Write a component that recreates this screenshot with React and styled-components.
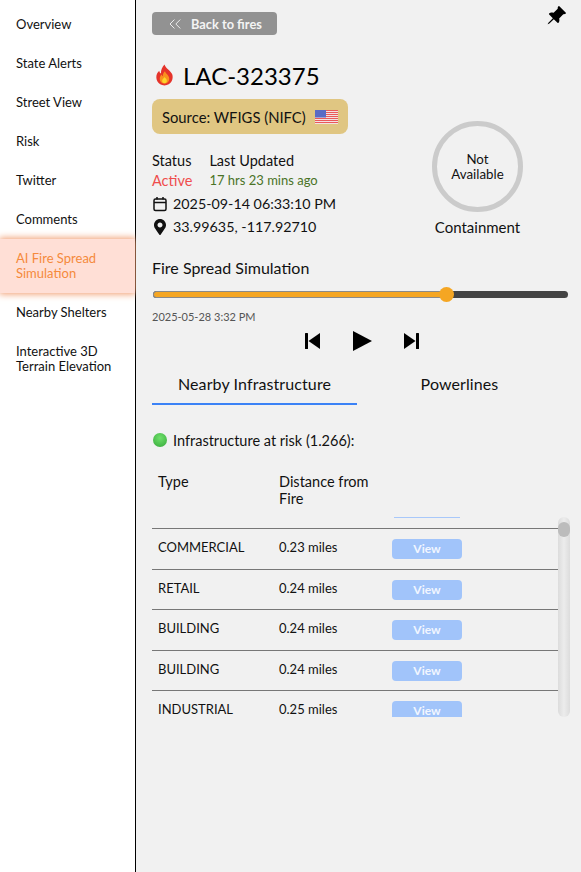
import React from "react";
import styled, { createGlobalStyle } from "styled-components";
import { BsPinAngleFill } from "react-icons/bs";
import { FaMapMarkerAlt } from "react-icons/fa";
import { FiChevronsLeft } from "react-icons/fi";

const navItems = [
  "Overview",
  "State Alerts",
  "Street View",
  "Risk",
  "Twitter",
  "Comments",
  "AI Fire Spread Simulation",
  "Nearby Shelters",
  "Interactive 3D Terrain Elevation",
];

const rows = [
  ["COMMERCIAL", "0.23 miles"],
  ["RETAIL", "0.24 miles"],
  ["BUILDING", "0.24 miles"],
  ["BUILDING", "0.24 miles"],
  ["INDUSTRIAL", "0.25 miles"],
];

function App() {
  return (
    <>
      <GlobalStyle />
      <Page>
        <Sidebar>
          {navItems.map((item) => (
            <NavItem key={item} $active={item.startsWith("AI")}>
              {item}
            </NavItem>
          ))}
        </Sidebar>
        <Main>
          <TopBar>
            <BackButton>
              <FiChevronsLeft size={20} strokeWidth={1.1} />
              Back to fires
            </BackButton>
            <PinIcon size={21} />
          </TopBar>

          <Title>
            <Flame />
            LAC-323375
          </Title>

          <Summary>
            <div>
              <Source>
                Source: WFIGS (NIFC)
                <Flag />
              </Source>
              <StatusRow>
                <StatusCol>
                  <Label>Status</Label>
                  <Active>Active</Active>
                </StatusCol>
                <StatusCol>
                  <Label>Last Updated</Label>
                  <Ago>17 hrs 23 mins ago</Ago>
                </StatusCol>
              </StatusRow>
              <InfoLine>
                <Calendar />
                2025-09-14 06:33:10 PM
              </InfoLine>
              <InfoLine>
                <MarkerIcon size={16} />
                33.99635, -117.92710
              </InfoLine>
            </div>
            <Containment>
              <Ring>
                Not
                <br />
                Available
              </Ring>
              <RingLabel>Containment</RingLabel>
            </Containment>
          </Summary>

          <SectionTitle>Fire Spread Simulation</SectionTitle>
          <Track>
            <TrackFill $percent={70.7} />
            <Thumb $percent={70.7} />
          </Track>
          <SliderDate>2025-05-28 3:32 PM</SliderDate>
          <Controls>
            <SkipBack />
            <Play />
            <SkipNext />
          </Controls>

          <Tabs>
            <Tab $active>Nearby Infrastructure</Tab>
            <Tab>Powerlines</Tab>
          </Tabs>

          <RiskLine>
            <GreenDot />
            Infrastructure at risk (1.266):
          </RiskLine>

          <TableHead>
            <span>Type</span>
            <span>
              Distance from
              <br />
              Fire
            </span>
          </TableHead>
          <Scroller>
            <PartialButton />
            {rows.map(([type, distance], i) => (
              <Row key={i}>
                <span>{type}</span>
                <span>{distance}</span>
                <ViewButton>View</ViewButton>
              </Row>
            ))}
            <ScrollTrack>
              <ScrollThumb />
            </ScrollTrack>
          </Scroller>
        </Main>
      </Page>
    </>
  );
}

function Flame() {
  return (
    <FlameSvg viewBox="0 0 20 22">
      <path
        d="M10 0c1 4 6 6 8 10 2 5-1 12-8 12S0 15 2 10c.7-1.600 1.500-2.600 2.500-3.500C4.700 8 5.300 9 6.300 9.400 6 6 7.500 2.500 10 0z"
        fill="#e5332a"
      />
      <path
        d="M10.500 7c.5 2.500 4.500 4 4.500 8 0 3-2.200 5-5 5s-5-2-5-5c0-2 1-3.500 2-4.500.2 1 .6 1.600 1.200 1.900C8.200 10 9 8.300 10.500 7z"
        fill="#f9901e"
      />
      <path
        d="M10 13c.6 1.200 2.500 2 2.500 4 0 1.500-1.100 2.600-2.500 2.600S7.500 18.500 7.500 17c0-1.800 1.800-2.500 2.500-4z"
        fill="#fbd52c"
      />
    </FlameSvg>
  );
}

function Flag() {
  const stripes = [0, 2, 4, 6, 8, 10, 12];
  return (
    <FlagSvg viewBox="0 0 23 14">
      <rect width="23" height="14" fill="#f4f1f1" />
      {stripes.map((y) => (
        <rect key={y} y={y} width="23" height="1.100" fill="#ea5a5a" />
      ))}
      <rect width="11" height="7.500" fill="#5a6bc4" />
    </FlagSvg>
  );
}

function Calendar() {
  return (
    <IconSvg viewBox="0 0 16 16" fill="none" stroke="#111" strokeWidth="1.500">
      <rect x="2" y="3" width="12" height="11.500" rx="1.500" />
      <path d="M2 6.500h12M5 1v2.500M11 1v2.500" />
    </IconSvg>
  );
}

function SkipBack() {
  return (
    <ControlSvg $w={15} $h={16} viewBox="0 0 15 16">
      <rect x="0" y="0" width="3" height="16" rx="0.500" />
      <path d="M15 0v16L3.500 8z" />
    </ControlSvg>
  );
}

function Play() {
  return (
    <ControlSvg $w={20} $h={20} viewBox="0 0 20 20">
      <path d="M1 0v20l19-10z" />
    </ControlSvg>
  );
}

function SkipNext() {
  return (
    <ControlSvg $w={15} $h={16} viewBox="0 0 15 16">
      <rect x="12" y="0" width="3" height="16" rx="0.500" />
      <path d="M0 0v16L11.500 8z" />
    </ControlSvg>
  );
}

const GlobalStyle = createGlobalStyle`
  html, body {
    margin: 0;
    padding: 0;
    background: #fff;
  }
  * {
    box-sizing: border-box;
  }
  body {
    font-family: "Lato", "Liberation Sans", sans-serif;
    color: #111;
  }
`;

const Page = styled.div`
  display: flex;
  width: 581px;
  height: 872px;
  overflow: hidden;
`;

const Sidebar = styled.nav`
  flex: 0 0 136px;
  padding-top: 5px;
  background: #fff;
  border-right: 1px solid #000;
`;

const NavItem = styled.div`
  padding: 12px 16px;
  font-size: 13px;
  line-height: 15px;
  color: ${(p) => (p.$active ? "#f58a3c" : "#111")};
  background: ${(p) => (p.$active ? "#ffdfd6" : "transparent")};
  box-shadow: ${(p) => (p.$active ? "0 0 7px 1px #f09a6c" : "none")};
`;

const Main = styled.main`
  flex: 1;
  min-width: 0;
  padding: 12px 12px 0 16px;
  background: #f1f1f1;
`;

const TopBar = styled.div`
  display: flex;
  justify-content: space-between;
  align-items: flex-start;
  padding-right: 2px;
`;

const BackButton = styled.div`
  display: flex;
  align-items: center;
  gap: 6px;
  width: 125px;
  height: 23px;
  padding-left: 13px;
  border-radius: 4px;
  background: #929292;
  color: #f4f4f4;
  font-size: 12.800px;
  font-weight: 700;
`;

const PinIcon = styled(BsPinAngleFill)`
  margin-top: -7px;
  color: #000;
`;

const Title = styled.h1`
  display: flex;
  align-items: center;
  gap: 9px;
  margin: 26px 0 0 3px;
  font-size: 24px;
  line-height: 30px;
  font-weight: 400;
  color: #000;
`;

const FlameSvg = styled.svg`
  width: 19px;
  height: 22px;
  margin-top: -3px;
`;

const Summary = styled.section`
  display: flex;
  align-items: flex-start;
  margin-top: 8px;
`;

const Source = styled.div`
  display: inline-flex;
  align-items: center;
  gap: 9px;
  width: 196px;
  height: 35px;
  padding-left: 10px;
  border-radius: 8px;
  background: #e0c682;
  font-size: 14.800px;
`;

const FlagSvg = styled.svg`
  width: 23px;
  height: 14px;
  flex: none;
`;

const StatusRow = styled.div`
  display: flex;
  gap: 17px;
  margin: 17px 0 2px;
`;

const StatusCol = styled.div`
  display: flex;
  flex-direction: column;
`;

const Label = styled.span`
  font-size: 14.500px;
  line-height: 19px;
`;

const Active = styled.span`
  margin-top: 1px;
  font-size: 14.500px;
  line-height: 19px;
  color: #ef4d4d;
`;

const Ago = styled.span`
  margin-top: 1px;
  font-size: 13px;
  line-height: 19px;
  color: #4a7326;
`;

const InfoLine = styled.div`
  display: flex;
  align-items: center;
  gap: 5px;
  height: 23px;
  font-size: 14.300px;
`;

const IconSvg = styled.svg`
  width: 16px;
  height: 16px;
`;

const MarkerIcon = styled(FaMapMarkerAlt)`
  color: #111;
`;

const Containment = styled.div`
  display: flex;
  flex-direction: column;
  align-items: center;
  width: 91px;
  margin: 22px 0 0 84px;
`;

const Ring = styled.div`
  display: flex;
  align-items: center;
  justify-content: center;
  width: 91px;
  height: 91px;
  border: 5px solid #cbcbcb;
  border-radius: 50%;
  font-size: 13.300px;
  line-height: 15px;
  text-align: center;
`;

const RingLabel = styled.div`
  margin-top: 6px;
  font-size: 15px;
  line-height: 18px;
  white-space: nowrap;
`;

const SectionTitle = styled.h2`
  margin: 20px 0 0;
  font-size: 16px;
  line-height: 20px;
  font-weight: 400;
`;

const Track = styled.div`
  position: relative;
  height: 7px;
  margin: 13px 1px 0 1px;
  border-radius: 4px;
  background: #444;
`;

const TrackFill = styled.div`
  width: ${(p) => p.$percent}%;
  height: 100%;
  border: 1px solid #8a8a8a;
  border-right: 0;
  border-radius: 4px 0 0 4px;
  background: #f5a623;
`;

const Thumb = styled.div`
  position: absolute;
  top: -4px;
  left: ${(p) => p.$percent}%;
  width: 15px;
  height: 15px;
  margin-left: -7px;
  border-radius: 50%;
  background: #f5a623;
`;

const SliderDate = styled.div`
  margin-top: 12px;
  font-size: 11px;
  line-height: 14px;
  color: #555;
`;

const Controls = styled.div`
  display: flex;
  align-items: center;
  justify-content: center;
  gap: 32px;
  margin-top: 7px;
  padding-left: 2px;
  height: 20px;
`;

const ControlSvg = styled.svg`
  width: ${(p) => p.$w}px;
  height: ${(p) => p.$h}px;
  fill: #000;
`;

const Tabs = styled.div`
  display: flex;
  margin-top: 19px;
`;

const Tab = styled.div`
  width: 205px;
  height: 35px;
  padding-top: 4px;
  font-size: 16px;
  line-height: 20px;
  letter-spacing: 0.1px;
  text-align: center;
  border-bottom: 2px solid ${(p) => (p.$active ? "#3b82f6" : "transparent")};
`;

const RiskLine = styled.div`
  display: flex;
  align-items: center;
  gap: 6px;
  margin: 25px 0 0 1px;
  height: 20px;
  font-size: 14.500px;
`;

const GreenDot = styled.span`
  width: 14px;
  height: 14px;
  border-radius: 50%;
  background: radial-gradient(circle at 50% 35%, #6fe06a, #35a83a);
`;

const TableHead = styled.div`
  display: grid;
  grid-template-columns: 121px 1fr;
  margin-top: 23px;
  padding-left: 6px;
  font-size: 14.500px;
  line-height: 17px;
`;

const Scroller = styled.div`
  position: relative;
  height: 200px;
  margin: 10px -1px 0 0;
  padding-right: 12px;
  overflow: hidden;
`;

const PartialButton = styled.div`
  width: 66px;
  height: 1px;
  margin-left: 242px;
  background: #a8c8fa;
  margin-bottom: 10px;
`;

const Row = styled.div`
  display: grid;
  grid-template-columns: 121px 113px 70px;
  align-items: start;
  height: 40.500px;
  padding: 10px 0 0 6px;
  border-top: 1px solid #777;
  font-size: 13px;
  line-height: 16px;
`;

const ViewButton = styled.div`
  height: 20px;
  line-height: 20px;
  border-radius: 4px;
  background: #a1c4fa;
  color: #f1f6ff;
  font-size: 12px;
  font-weight: 700;
  text-align: center;
`;

const ScrollTrack = styled.div`
  position: absolute;
  top: 0;
  right: 0;
  width: 12px;
  height: 100%;
  border-radius: 6px;
  background: linear-gradient(90deg, #dcdcdc, #ececec 50%, #dcdcdc);
`;

const ScrollThumb = styled.div`
  width: 12px;
  height: 15px;
  margin-top: 5px;
  border-radius: 6px;
  background: #bcbcbc;
`;

export default App;
